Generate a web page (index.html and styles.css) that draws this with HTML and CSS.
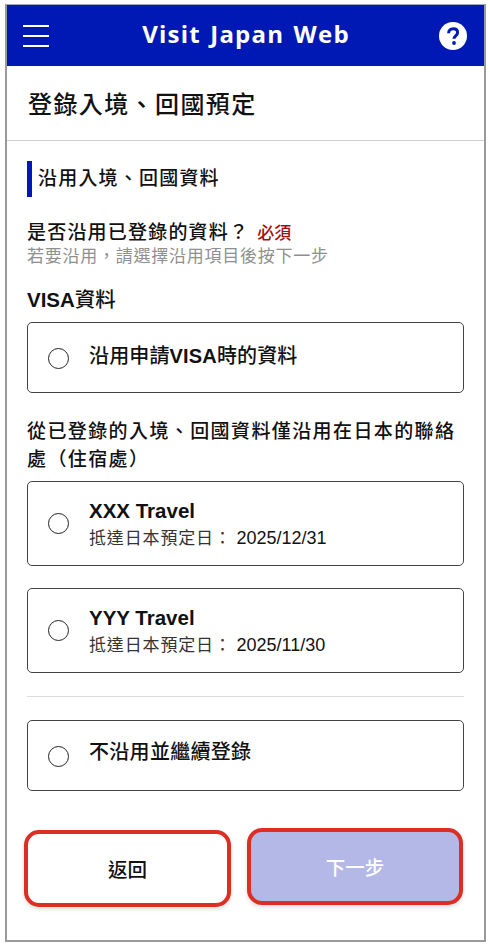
FILE: index.html
```html
<!DOCTYPE html>
<html lang="zh-TW">
<head>
<meta charset="utf-8">
<title>Visit Japan Web</title>
<link rel="stylesheet" href="styles.css">
</head>
<body>
<div class="frame">
  <header class="topbar">
    <svg class="menu" width="26" height="22" viewBox="0 0 26 22"><path d="M0 1h26M0 11h26M0 21h26" stroke="#fff" stroke-width="2.2"/></svg>
    <div class="brand">Visit Japan Web</div>
    <svg class="help" width="28" height="28" viewBox="0 0 28 28"><circle cx="14" cy="14" r="14" fill="#fff"/><path d="M9.6 11.2c0-2.8 2-4.4 4.6-4.4s4.4 1.5 4.4 3.8c0 3.2-3.6 3.4-3.6 6.2" fill="none" stroke="#0019b4" stroke-width="3"/><circle cx="15" cy="21" r="1.9" fill="#0019b4"/></svg>
  </header>
  <h1 class="page-title">登錄入境、回國預定</h1>
  <main class="content">
    <h2 class="section-title">沿用入境、回國資料</h2>
    <div class="question"><span>是否沿用已登錄的資料？</span><span class="required">必須</span></div>
    <p class="hint">若要沿用，請選擇沿用項目後按下一步</p>
    <h3 class="group-label visa-label"><span class="latin-bold">VISA</span>資料</h3>
    <label class="option option-short">
      <span class="radio"></span>
      <span class="option-main">沿用申請<span class="latin-bold">VISA</span>時的資料</span>
    </label>
    <h3 class="group-label stay-label">從已登錄的入境、回國資料僅沿用在日本的聯絡處（住宿處）</h3>
    <label class="option option-tall">
      <span class="radio"></span>
      <span class="option-text">
        <span class="option-name">XXX Travel</span>
        <span class="option-date">抵達日本預定日： <span class="date-num">2025/12/31</span></span>
      </span>
    </label>
    <label class="option option-tall second">
      <span class="radio"></span>
      <span class="option-text">
        <span class="option-name">YYY Travel</span>
        <span class="option-date">抵達日本預定日： <span class="date-num">2025/11/30</span></span>
      </span>
    </label>
    <hr class="divider">
    <label class="option option-short">
      <span class="radio"></span>
      <span class="option-main regular">不沿用並繼續登錄</span>
    </label>
    <div class="actions">
      <button class="btn btn-back">返回</button>
      <button class="btn btn-next">下一步</button>
    </div>
  </main>
</div>
</body>
</html>
```

FILE: styles.css
```css
* { box-sizing: border-box; }
html, body { margin: 0; padding: 0; background: #fff; }
body {
  padding: 4px 0 0 5px;
  font-family: "Noto Sans CJK TC", "Noto Sans", sans-serif;
  color: #111;
}
.frame {
  width: 481px;
  height: 938px;
  border: 2px solid #9a9a9a;
  border-top-color: #a3a8c0;
  border-top-width: 1px;
  overflow: hidden;
}
.topbar {
  height: 61px;
  background: #0019b4;
  display: flex;
  align-items: center;
  justify-content: space-between;
  padding: 0 16px;
}
.brand {
  font-family: "Open Sans", sans-serif;
  font-weight: 700;
  font-size: 24px;
  letter-spacing: 1.2px;
  word-spacing: 2px;
  color: #fff;
  padding: 0 0 5px 4px;
}
.help { margin-right: 1px; }
.page-title {
  margin: 0;
  height: 75px;
  padding: 19px 0 0 21px;
  font-size: 24px;
  line-height: 36px;
  font-weight: 500;
  letter-spacing: 1.4px;
  border-bottom: 1px solid #cfcfcf;
}
.content { padding: 20px 20px 0 20px; }
.section-title {
  margin: 0;
  height: 36px;
  border-left: 5px solid #0019b4;
  padding-left: 6px;
  font-size: 19px;
  line-height: 32px;
  font-weight: 500;
  letter-spacing: 1.2px;
}
.question {
  margin-top: 22px;
  display: flex;
  align-items: baseline;
  font-size: 19px;
  line-height: 24px;
  font-weight: 500;
  letter-spacing: 1.2px;
}
.required {
  color: #a01010;
  font-size: 17px;
  font-weight: 500;
  letter-spacing: 0;
  margin-left: 8px;
}
.hint {
  margin: 0;
  font-size: 17px;
  line-height: 22px;
  color: #8f8f8f;
  letter-spacing: 0.75px;
}
.group-label {
  margin: 0;
  font-size: 19px;
  line-height: 28px;
  font-weight: 500;
  letter-spacing: 1.4px;
}
.latin-bold {
  font-family: "Liberation Sans", sans-serif;
  font-weight: 700;
}
.visa-label { margin-top: 18px; font-size: 20.5px; letter-spacing: 0; }
.stay-label { margin-top: 23px; }
.option {
  display: flex;
  align-items: center;
  border: 1px solid #444;
  border-radius: 5px;
  padding-left: 20px;
  background: #fff;
}
.visa-label + .option { margin-top: 8px; }
.option-short { height: 71px; }
.option-short .radio { margin-top: 1px; }
.stay-label + .option { margin-top: 9px; }
.option-tall { height: 85px; }
.second { margin-top: 22px; }
.radio {
  flex: none;
  width: 21px;
  height: 21px;
  border: 1px solid #222;
  border-radius: 50%;
  margin-right: 20px;
  background: #fff;
}
.option-main {
  font-size: 20px;
  line-height: 26px;
  font-weight: 500;
  letter-spacing: 0.15px;
  margin-top: -4px;
}
.option-main.regular { letter-spacing: 0.3px; margin-top: -9px; }
.option-text { display: flex; flex-direction: column; }
.option-name {
  font-family: "Liberation Sans", sans-serif;
  font-weight: 700;
  font-size: 20.5px;
  line-height: 27px;
}
.option-date {
  font-size: 17px;
  line-height: 25px;
  letter-spacing: 0.85px;
  color: #333;
}
.date-num {
  font-family: "Liberation Sans", sans-serif;
  font-size: 18px;
  letter-spacing: 0;
  color: #111;
}
.divider {
  margin: 23px 0 23px;
  border: 0;
  border-top: 1px solid #dcdcdc;
}
.actions {
  margin-top: 37px;
  display: flex;
  justify-content: space-between;
  align-items: flex-start;
  margin-left: -3px;
  margin-right: 1px;
}
.btn {
  font-family: "Noto Sans CJK TC", sans-serif;
  font-size: 19.5px;
  font-weight: 500;
  border: 4px solid #dd2e24;
  border-radius: 15px;
  box-shadow: 0 2px 4px rgba(0,0,0,.15);
}
.btn-back {
  width: 207px;
  height: 77px;
  margin-top: 2px;
  background: #fff;
  color: #111;
}
.btn-next {
  width: 216px;
  height: 77px;
  background: #b3b8e6;
  color: #fff;
}
```
